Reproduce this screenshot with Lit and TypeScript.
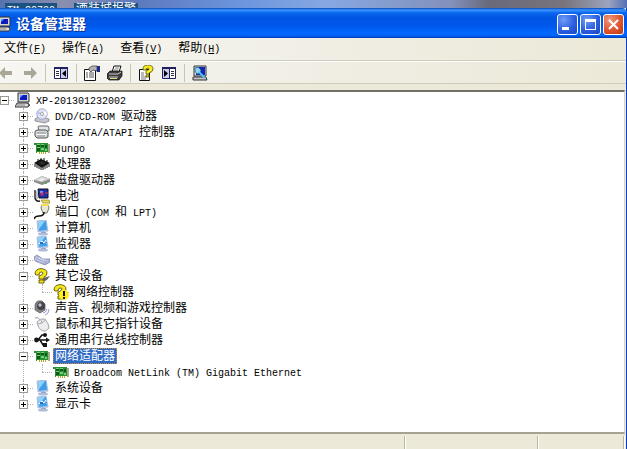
import { LitElement, html, svg, css, nothing, SVGTemplateResult, TemplateResult } from "lit";
import { customElement, property, state } from "lit/decorators.js";
import { classMap } from "lit/directives/class-map.js";

interface DeviceNode {
  label: string;
  icon: string;
  open?: boolean;
  children?: DeviceNode[];
}

const screen = svg`
  <path d="M3 1 L12 0 L14 11 L4 12 Z" fill="#c3daf4" stroke="#8fa6d0" stroke-width=".7"/>
  <path d="M4 2 L12 1 L13 10 L5 11 Z" fill="#3f9ee8"/>
  <path d="M4 2 L11 1 L5 9 Z" fill="#8fd2fb"/>
  <path d="M7 12h5v2H7z" fill="#8c9cc0"/><ellipse cx="9" cy="14" rx="5" ry="1.6" fill="#b0bbd8"/>`;

const card = svg`
  <path d="M0 3h14v9H3v1H2V5H0z" fill="#2a8f35"/><path d="M14 4h2v9h-2z" fill="#9fae86"/>
  <path d="M3 5h3v2H3zM7 5h3v2H7zM3 8h3v3H3zM11 5h2v3h-2z" fill="#0f5a1b"/>
  <path d="M3 4h3v1H3zM7 4h3v1H7zM7 8h3v2H7zM11 9h2v2h-2zM3 7h3v1H3z" fill="#74d070"/>
  <path d="M5 12h1v2H5zM7 12h1v2H7zM9 12h1v2H9zM11 12h1v2h-1z" fill="#b3ab32"/>`;

const question = svg`
  <path d="M9 10 L16 8 L13 12 L8 14 Z" fill="#666"/>
  <path d="M1 6 Q1 1 7 .6 Q13 1 13 5 Q13 8 10 9 V11 H5 V8 Q9 7 9 5 Q9 4 7 4 Q5 4 5 7 L2 7 Z" fill="#f4e81c" stroke="#5c5400" stroke-width=".9"/>
  <path d="M5 12h5v3H5z" fill="#f4e81c" stroke="#5c5400" stroke-width=".9"/>`;

const help = svg`
  <path d="M1.5 4.5h10v11h-10z" fill="#fff" stroke="#111"/>
  <path d="M3 8h3M3 10h3M3 12h6M3 14h5" stroke="#777"/>
  <path d="M5 4 Q5 0 10 0 Q15 0 15 4 Q15 7 11 8 V9 H8 V6 Q11 5 11 4 Q11 3 10 3 Q8 3 8 5 H5Z" fill="#f6ed23" stroke="#5a5200" stroke-width=".8"/>
  <path d="M8 10h3v2H8z" fill="#f6ed23" stroke="#5a5200" stroke-width=".8"/>`;

const icons: Record<string, SVGTemplateResult> = {
  pc: svg`
    <path d="M3 1h10l1 1v8H3z" fill="#d3d3d8" stroke="#333"/><path d="M5 3h7v5H5z" fill="#0a1cc0"/>
    <path d="M5 3h3L5 6z" fill="#5ba0ff"/><path d="M2 11h11l1 2-1 2H0z" fill="#dcdcdc" stroke="#333"/>
    <path d="M2 13h8" stroke="#888"/><path d="M12 11 L15 13 L13 15" fill="none" stroke="#555"/>`,
  disc: svg`
    <path d="M1 11 L5 8 L15 11 V13 L11 15 L1 13 Z" fill="#c5c5cf" stroke="#82828e" stroke-width=".8"/>
    <circle cx="8" cy="6" r="5.3" fill="#dfe2f5" stroke="#9a9ec0" stroke-width=".8"/>
    <path d="M8 6 L12 3 L13 7Z" fill="#fff"/><path d="M8 6 L4 3 L3 6Z" fill="#bfc4ec"/><circle cx="8" cy="6" r="1.5" fill="#fff" stroke="#888" stroke-width=".7"/>`,
  ide: svg`
    <path d="M4 3 Q4 2 6 2H14L15 4V7H5Z" fill="#e3e6e6" stroke="#666"/>
    <path d="M1 8 Q1 6 4 6H12L14 8V13L12 14H3L1 12Z" fill="#d5dada" stroke="#555"/>
    <path d="M3 9h9M3 12h8" stroke="#88908e"/><path d="M3 10h9v1H3z" fill="#fff"/>`,
  card,
  cpu: svg`
    <path d="M0 7 L7 3 L16 7 L8 12 Z" fill="#111"/><path d="M4 7 L8 5 L12 7 L8 9Z" fill="#2b2b2b"/>
    <path d="M1 8v3M3 9v3M5 10v3M7 11v3M9 11v3M11 10v3M13 9v3M15 8v3M4 3v2M7 2v2M10 2v3M13 4v2" stroke="#111"/>
    <path d="M1 8 L8 12 L15 8" fill="none" stroke="#777" stroke-width=".6"/>`,
  disk: svg`
    <path d="M0 8 L8 4 L16 7 V10 L8 13 L0 10Z" fill="#8b8b8b"/><path d="M0 8 L8 4 L16 7 L8 10Z" fill="#d2d2d2"/>
    <path d="M4 8 L8 6 L11 7 L7 9Z" fill="#f3f3f3"/><path d="M10 11h3v1h-3z" fill="#5eb15e"/>`,
  battery: svg`
    <path d="M1 2v8q1 4 5 3" fill="none" stroke="#222" stroke-width="1.4"/><path d="M4 1 H14 V10 H5Z" fill="#1c2fae" stroke="#111"/>
    <path d="M6 3h3v2H6z" fill="#6f9cf0"/><path d="M8 4v4M6 6h4M11 5h3" stroke="#e33a4e"/><path d="M3 3v8" stroke="#c5c5d2" stroke-width="2"/>
    <path d="M7 12h8l1 3H9z" fill="#eadc65" stroke="#8a7b20" stroke-width=".7"/>`,
  port: svg`
    <path d="M8 0h6l1 4-2 5H9L7 4z" fill="#e9e6d4" stroke="#777"/><path d="M7 0h8v2H7z" fill="#f2df52"/>
    <path d="M10 8 Q10 12 5 12 Q1 12 0 15" fill="none" stroke="#111" stroke-width="1.6"/>`,
  computer: screen,
  monitor: svg`${screen}<path d="M5 8l3-3 2 2 2-3" stroke="#fff" fill="none"/><path d="M6 6h3v2H6z" fill="#2b6ebd"/>`,
  keyboard: svg`
    <path d="M0 5 L3 3 L9 7 L16 7 V10 L11 13 L1 9 Z" fill="#aab0d4" stroke="#7c81a9" stroke-width=".7"/>
    <path d="M2 5l9 4M1 7l9 4M5 6l9 3" stroke="#eef0ff" stroke-dasharray="1 1"/>`,
  unknown: question,
  warn: svg`${question}<circle cx="11" cy="11" r="5" fill="#ffed1f"/><path d="M10 7h2v5h-2zM10 13h2v2h-2z" fill="#111"/>`,
  sound: svg`
    <path d="M1 5 Q2 0 8 1 L11 4 V10 L6 13 L1 10Z" fill="#85858c" stroke="#555" stroke-width=".7"/>
    <circle cx="7" cy="6" r="4" fill="#43434a"/><circle cx="6" cy="5" r="1.7" fill="#c2c2cc"/>
    <path d="M9 13q3 0 4-4M11 15q4-1 4-6" fill="none" stroke="#9a9cd4"/>`,
  mouse: svg`
    <path d="M1 2q3-2 5 2" fill="none" stroke="#999"/><path d="M3 6 Q6 2 11 3 Q15 8 15 12 Q12 16 9 15 Q4 13 3 6Z" fill="#ededf0" stroke="#8e8e98" stroke-width=".8"/>
    <path d="M4 8 Q9 8 11 4M8 7L7 4" fill="none" stroke="#aaa"/>`,
  usb: svg`
    <path d="M2 8H14M4 8L8 3H11M6 8L9 13H12" fill="none" stroke="#151515" stroke-width="1.5"/>
    <circle cx="2.5" cy="8" r="2.4" fill="#151515"/><path d="M16 8l-4-2.5v5z" fill="#151515"/><circle cx="11" cy="3" r="2" fill="#151515"/><path d="M9 11h4v4H9z" fill="#151515"/>`,
  back: svg`<path d="M0 8 L6 2 V6 H13 V10 H6 V14Z" fill="#aaa798"/>`,
  forward: svg`<path d="M15 8 L9 2 V6 H2 V10 H9 V14Z" fill="#aaa798"/>`,
  tree: svg`
    <path d="M1.5 2.5h13v11h-13z" fill="#fff" stroke="#20205c"/><path d="M1 2h14v2H1z" fill="#20205c"/><path d="M7.5 4v9" stroke="#20205c"/>
    <path d="M8 4h6v9H8z" fill="#c9cdee"/><path d="M3 6.5h3M3 8.5h3M3 10.5h3" stroke="#333"/><path d="M13 5v7L9 8.5z" fill="#000"/>`,
  pane: svg`
    <path d="M1.5 2.5h13v11h-13z" fill="#fff" stroke="#20205c"/><path d="M1 2h14v2H1z" fill="#20205c"/><path d="M8.5 4v9" stroke="#20205c"/>
    <path d="M2 4h6v9H2z" fill="#c9cdee"/><path d="M10 6.5h3M10 8.5h3M10 10.5h3" stroke="#333"/><path d="M3 5v7l4-3.5z" fill="#000"/>`,
  props: svg`
    <path d="M.5 4.5h11v11H.5z" fill="#fff" stroke="#111"/><path d="M2 8h2M5 8h5M2 10h2M5 10h5M2 12h2M5 12h5" stroke="#555"/>
    <path d="M5 3 L8 1 H13 V6 L9 5 L7 7 L5 5Z" fill="#b4b4b4" stroke="#444" stroke-width=".8"/><path d="M13 1h3v6h-3z" fill="#1c2a8c"/>`,
  printer: svg`
    <path d="M5 7 L7 1 H14 L12 7Z" fill="#fff" stroke="#111"/><path d="M8 3h4M7 5h4" stroke="#888"/>
    <path d="M0 9 L3 6 H15 V11 L12 15 H2 L0 13Z" fill="#3c3c3c" stroke="#111" stroke-width=".7"/>
    <path d="M2 9h9l3-2M2 12h9" stroke="#ccc" fill="none"/><path d="M3 13h7v1H3z" fill="#e3dd75"/>`,
  help,
  scan: svg`
    <path d="M2 1h12v10H2z" fill="#ddd" stroke="#333"/><path d="M4 2h9v8H4z" fill="#1026b8"/>
    <path d="M1 12h13l1 3H1z" fill="#c6c6c6" stroke="#333"/><path d="M3 3l3-1 3 3-1 3-3 1-2-3z" fill="#8ed3f3" stroke="#1b5f94" stroke-width=".7"/>
    <path d="M7 7l6 6" stroke="#4cc0ee" stroke-width="2"/>`,
};

const icon = (name: string) => html`<svg class="icon" viewBox="0 0 16 16" aria-hidden="true">${icons[name]}</svg>`;

/* Half-width runs are set in the narrow monospaced face, full-width runs in the CJK face. */
const runs = (text: string) =>
  (text.match(/[\x20-\x7e]+|[^\x20-\x7e]+/g) ?? []).map((part) =>
    /^[\x20-\x7e]/.test(part) ? html`<span class="half">${part}</span>` : part
  );

const shared = css`
  * { box-sizing: border-box; }
  .icon { width: 16px; height: 16px; flex: none; display: block; }
  .half { font-family: "Liberation Mono", monospace; font-size: 10px; white-space: pre; }
  button { font: inherit; color: inherit; margin: 0; padding: 0; border: 0; background: none; }
`;

@customElement("device-tree")
export class DeviceTree extends LitElement {
  @property({ attribute: false }) root!: DeviceNode;
  @state() private selected = "网络适配器";

  static styles = [shared, css`
    :host { display: block; }
    ul { list-style: none; margin: 0; padding: 0; }
    .tree { margin-left: -5px; }
    .branch { padding-left: 19px; }
    .item { position: relative; }
    .line::before {
      content: ""; position: absolute; left: 9px; top: 0; bottom: 0;
      border-left: 1px dotted #b4b4b4;
    }
    .line:last-child::before { bottom: auto; height: 8px; }
    .row { display: flex; align-items: center; height: 16px; }
    .joint { position: relative; width: 19px; height: 16px; margin-right: 1px; flex: none; display: grid; place-items: center; }
    .joint::before {
      content: ""; position: absolute; left: 9px; right: 0; top: 8px;
      border-top: 1px dotted #b4b4b4;
    }
    .toggle {
      position: relative; width: 9px; height: 9px; background: #fff;
      border: 1px solid #9b9b91; display: grid; place-items: center;
    }
    .sign { display: block; width: 5px; height: 5px; }
    .label { height: 16px; line-height: 16px; margin-left: 3px; padding: 0 2px; white-space: nowrap; cursor: default; }
    .selected { background: #316ac5; color: #fff; outline: 1px dotted #c98f3c; outline-offset: -1px; }
  `];

  private toggle(node: DeviceNode) {
    node.open = !node.open;
    this.requestUpdate();
  }

  private renderNode(node: DeviceNode, depth: number): TemplateResult {
    return html`
      <li class=${classMap({ item: true, line: depth > 0 })} role="treeitem">
        <div class="row">
          <span class="joint">${depth < 2 ? html`
            <button class="toggle" aria-label="${node.open ? "折叠" : "展开"} ${node.label}" @click=${() => this.toggle(node)}>
              <svg class="sign" viewBox="0 0 5 5" shape-rendering="crispEdges"><path d=${node.open ? "M0 2h5v1H0z" : "M0 2h5v1H0zM2 0h1v5H2z"}/></svg>
            </button>` : nothing}</span>
          ${icon(node.icon)}
          <span class=${classMap({ label: true, selected: node.label === this.selected })}
            @click=${() => (this.selected = node.label)}>${runs(node.label)}</span>
        </div>
        ${node.open && node.children
          ? html`<ul class="branch" role="group">${node.children.map((c) => this.renderNode(c, depth + 1))}</ul>`
          : nothing}
      </li>`;
  }

  render() {
    return html`<ul class="tree" role="tree">${this.renderNode(this.root, 0)}</ul>`;
  }
}

@customElement("app-root")
export class AppRoot extends LitElement {
  private root: DeviceNode = {
    label: "XP-201301232002", icon: "pc", open: true,
    children: [
      { label: "DVD/CD-ROM 驱动器", icon: "disc" },
      { label: "IDE ATA/ATAPI 控制器", icon: "ide" },
      { label: "Jungo", icon: "card" },
      { label: "处理器", icon: "cpu" },
      { label: "磁盘驱动器", icon: "disk" },
      { label: "电池", icon: "battery" },
      { label: "端口 (COM 和 LPT)", icon: "port" },
      { label: "计算机", icon: "computer" },
      { label: "监视器", icon: "monitor" },
      { label: "键盘", icon: "keyboard" },
      { label: "其它设备", icon: "unknown", open: true, children: [{ label: "网络控制器", icon: "warn" }] },
      { label: "声音、视频和游戏控制器", icon: "sound" },
      { label: "鼠标和其它指针设备", icon: "mouse" },
      { label: "通用串行总线控制器", icon: "usb" },
      {
        label: "网络适配器", icon: "card", open: true,
        children: [{ label: "Broadcom NetLink (TM) Gigabit Ethernet", icon: "card" }],
      },
      { label: "系统设备", icon: "computer" },
      { label: "显示卡", icon: "monitor" },
    ],
  };

  private menus = [["文件", "F"], ["操作", "A"], ["查看", "V"], ["帮助", "H"]];

  private tools = [
    [["back", "后退"], ["forward", "前进"]],
    [["tree", "显示/隐藏控制台树"]],
    [["props", "属性"], ["printer", "打印"]],
    [["help", "帮助"], ["pane", "操作窗格"]],
    [["scan", "扫描检测硬件改动"]],
  ];

  static styles = [shared, css`
    :host {
      display: flex; flex-direction: column; min-height: 100vh; overflow: hidden;
      font: 12px/16px "Liberation Sans", "Noto Sans CJK SC", sans-serif; color: #000;
      background: #ece9d8;
    }
    .desktop {
      height: 8px; flex: none; overflow: hidden; display: flex; gap: 17px; padding: 3px 0 0 5px;
      background: linear-gradient(90deg, #5674b0, #8a8fae 10%, #5c79bd 22%, #6c94dd 38%, #86a8e2 52%, #8391bb 72%, #69697a 78%, #79747c 90%, #9ca4bf 97%, #5670b4);
    }
    .shortcut { background: #1c5180; color: #fff; height: 12px; line-height: 12px; padding: 0 2px; white-space: nowrap; }
    .window { flex: 1; display: flex; flex-direction: column; border-right: 1px solid #0a3fc9; }
    .title {
      height: 30px; flex: none; display: flex; align-items: center; padding: 2px 3px 0 0; margin-right: -1px;
      border-top-right-radius: 5px; color: #fff;
      background: linear-gradient(#0848b8 0, #3a94ff 2px, #0a66ee 5px, #0054e3 10px, #0058ec 18px, #0268ff 25px, #0060f5 28px, #0036b0 30px);
    }
    .title .icon { margin-left: -4px; }
    .name { flex: 1; margin: 0 0 0 4px; font-size: 14px; line-height: 16px; font-weight: bold; text-shadow: 1px 1px #0a2f8c; }
    .controls { display: flex; gap: 2px; }
    .control {
      width: 21px; height: 21px; border: 1px solid #fff; border-radius: 3px; display: grid; place-items: center;
      background: radial-gradient(circle at 30% 25%, #6f9cf7, #2c5fe0 55%, #1a45c4);
    }
    .close { background: radial-gradient(circle at 30% 25%, #f09a7c, #dd5630 55%, #b83714); }
    .glyph { width: 15px; height: 15px; display: block; }
    .menus {
      display: flex; height: 23px; flex: none; align-items: center; gap: 16px; padding-left: 4px;
      background: linear-gradient(90deg, #f7f6f2, #efede2 60%, #ece9d8); border-bottom: 1px solid #cfccbb;
    }
    .menu { white-space: nowrap; }
    .key { text-decoration: underline; }
    .tools {
      display: flex; height: 23px; flex: none; align-items: center; margin-left: -5px;
      background: linear-gradient(90deg, #f7f6f2, #efede2 60%, #ece9d8);
      border-top: 1px solid #fff; border-bottom: 1px solid #cfccbb;
    }
    .group { display: flex; align-items: center; }
    .group + .group::before { content: ""; width: 1px; height: 18px; margin: 0 3px 0 4px; background: #c8c5b5; }
    .tool { width: 23px; height: 20px; display: grid; place-items: center; }
    .list {
      flex: 1; margin: 6px 1px 0 0; background: #fff; border-top: 2px solid #716f64; border-bottom: 2px solid #a5a294;
      border-right: 1px solid #d8d5c6;
    }
    .status { height: 15px; flex: none; display: flex; padding: 2px 2px 0 0; }
    .cell { flex: 1; border-right: 1px solid #b9b6a5; box-shadow: 1px 0 #fff; }
    .mid { flex: none; width: 132px; margin-left: 1px; }
    .end { flex: none; width: 85px; margin-left: 1px; }
  `];

  render() {
    return html`
      <div class="desktop">
        <span class="shortcut">${runs("TM-C0700")}</span>
        <span class="shortcut">酒装城报警</span>
      </div>
      <main class="window">
        <header class="title">
          ${icon("pc")}
          <h1 class="name">设备管理器</h1>
          <div class="controls">
            <button class="control" aria-label="最小化"><svg class="glyph" viewBox="0 0 15 15"><path d="M2 10h7v3H2z" fill="#fff"/></svg></button>
            <button class="control" aria-label="最大化"><svg class="glyph" viewBox="0 0 15 15"><path d="M2 2h11v11H2zM3 5v7h9V5z" fill="#fff" fill-rule="evenodd"/></svg></button>
            <button class="control close" aria-label="关闭"><svg class="glyph" viewBox="0 0 15 15"><path d="M3 3l9 9M12 3l-9 9" stroke="#fff" stroke-width="2"/></svg></button>
          </div>
        </header>
        <nav class="menus">
          ${this.menus.map(([name, key]) => html`<button class="menu">${name}<span class="half">(<span class="key">${key}</span>)</span></button>`)}
        </nav>
        <div class="tools" role="toolbar">
          ${this.tools.map((group) => html`<div class="group">
            ${group.map(([name, label]) => html`<button class="tool" aria-label=${label}>${icon(name)}</button>`)}
          </div>`)}
        </div>
        <section class="list"><device-tree .root=${this.root}></device-tree></section>
        <footer class="status">
          <div class="cell"></div>
          <div class="cell mid"></div>
          <div class="cell end"></div>
        </footer>
      </main>`;
  }
}
